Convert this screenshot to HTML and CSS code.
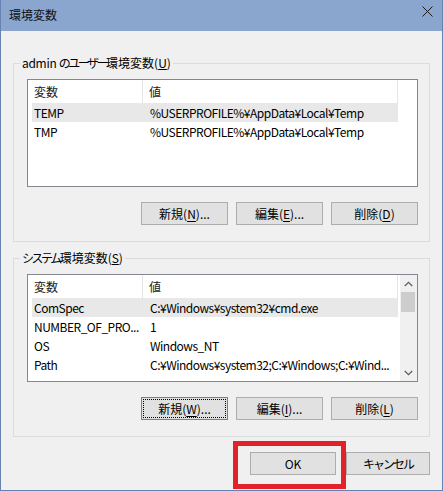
FILE: index.html
```html
<!DOCTYPE html>
<html lang="ja">
<head>
<meta charset="utf-8">
<title>環境変数</title>
<link rel="stylesheet" href="styles.css">
</head>
<body>
<div class="window">
  <div class="titlebar">
    <span class="title">環境変数</span>
    <svg class="close" width="11" height="11" viewBox="0 0 11 11"><path d="M0.5 0.5 L10.5 10.5 M10.5 0.5 L0.5 10.5" stroke="#1a1a1a" stroke-width="1" fill="none"/></svg>
  </div>
  <div class="content">
    <fieldset class="group first">
      <legend><span class="latin">admin </span><span class="kana">のユーザー</span>環境変数(<u>U</u>)</legend>
      <div class="list">
        <div class="list-main">
          <div class="header"><div class="hcell c1">変数</div><div class="hcell c2">値</div></div>
          <div class="row sel"><span class="cell c1">TEMP</span><span class="cell c2">%USERPROFILE%¥AppData¥Local¥Temp</span></div>
          <div class="row"><span class="cell c1">TMP</span><span class="cell c2">%USERPROFILE%¥AppData¥Local¥Temp</span></div>
        </div>
      </div>
      <div class="buttons">
        <button class="btn">新規(<u>N</u>)...</button>
        <button class="btn">編集(<u>E</u>)...</button>
        <button class="btn">削除(<u>D</u>)</button>
      </div>
    </fieldset>
    <fieldset class="group second">
      <legend><span class="kana">システム</span>環境変数(<u>S</u>)</legend>
      <div class="list">
        <div class="list-main">
          <div class="header"><div class="hcell c1">変数</div><div class="hcell c2">値</div></div>
          <div class="row sel"><span class="cell c1">ComSpec</span><span class="cell c2">C:¥Windows¥system32¥cmd.exe</span></div>
          <div class="row"><span class="cell c1">NUMBER_OF_PRO...</span><span class="cell c2">1</span></div>
          <div class="row"><span class="cell c1">OS</span><span class="cell c2">Windows_NT</span></div>
          <div class="row"><span class="cell c1">Path</span><span class="cell c2">C:¥Windows¥system32;C:¥Windows;C:¥Wind...</span></div>
        </div>
        <div class="scrollbar">
          <div class="arrow"><svg width="9" height="6" viewBox="0 0 9 6"><path d="M0.8 5 L4.5 1.3 L8.2 5" stroke="#606060" stroke-width="1.3" fill="none"/></svg></div>
          <div class="thumb"></div>
          <div class="track"></div>
          <div class="arrow"><svg width="9" height="6" viewBox="0 0 9 6"><path d="M0.8 1 L4.5 4.7 L8.2 1" stroke="#606060" stroke-width="1.3" fill="none"/></svg></div>
        </div>
      </div>
      <div class="buttons">
        <button class="btn focus">新規(<u>W</u>)...</button>
        <button class="btn">編集(<u>I</u>)...</button>
        <button class="btn">削除(<u>L</u>)</button>
      </div>
    </fieldset>
    <div class="dialog-buttons">
      <button class="btn ok">OK</button>
      <button class="btn cancel"><span class="kana-btn">キャンセル</span></button>
    </div>
  </div>
  <div class="annotation"></div>
</div>
</body>
</html>
```
FILE: styles.css
```css
html, body {
  margin: 0;
  padding: 0;
}
body {
  width: 443px;
  height: 491px;
  font-family: "Noto Sans CJK JP", "Noto Sans", sans-serif;
  font-size: 12px;
  color: #000;
  overflow: hidden;
}
.window {
  position: relative;
  box-sizing: border-box;
  width: 443px;
  height: 491px;
  border: 1px solid #6582b3;
  border-top: none;
  background: #f0f0f0;
  display: flex;
  flex-direction: column;
}
.titlebar {
  height: 31px;
  background: #8aa6cf;
  display: flex;
  align-items: center;
  justify-content: space-between;
  padding: 0 9px 1px 8px;
  box-sizing: border-box;
}
.title {
  font-size: 12px;
  line-height: 16px;
  color: #111;
}
.close {
  display: block;
  margin-top: -7px;
}
.content {
  padding: 0 12px;
  display: flex;
  flex-direction: column;
}
.group {
  margin: 0;
  padding: 8px 11px 16px 13px;
  border: 1px solid #dcdcdc;
  min-width: 0;
}
.group.first {
  margin-top: 24px;
}
.group.second {
  margin-top: 8px;
}
.group legend {
  padding: 0 2px;
  margin-left: -7px;
  line-height: 16px;
  font-size: 12px;
  color: #000;
}
.latin {
  letter-spacing: -0.3px;
}
.kana {
  letter-spacing: -2.5px;
}
.kana-btn {
  letter-spacing: -2px;
}
.list {
  box-sizing: border-box;
  height: 108px;
  border: 1px solid #828790;
  background: #fff;
  display: flex;
}
.list-main {
  flex: 1;
  min-width: 0;
}
.header {
  height: 23px;
  display: grid;
  grid-template-columns: 115px 255px 1fr;
  background: #fff;
  box-sizing: border-box;
}
.hcell {
  line-height: 23px;
  color: #1a1a1a;
  border-right: 1px solid #e5e5e5;
  box-sizing: border-box;
}
.hcell.c1 {
  padding-left: 6px;
}
.hcell.c2 {
  padding-left: 6px;
}
.row {
  margin-left: 4px;
  width: 366px;
  height: 19px;
  display: grid;
  grid-template-columns: 111px 1fr;
  line-height: 19px;
  white-space: nowrap;
  letter-spacing: -0.5px;
}
.row.sel {
  background: #e8e8e8;
}
.cell.c1 {
  padding-left: 2px;
}
.cell.c2 {
  padding-left: 7px;
}
.scrollbar {
  width: 17px;
  background: #f0f0f0;
  display: flex;
  flex-direction: column;
}
.arrow {
  height: 17px;
  display: flex;
  align-items: center;
  justify-content: center;
}
.arrow svg {
  display: block;
}
.thumb {
  height: 20px;
  margin: 0 2px 0 1px;
  background: #cdcdcd;
}
.track {
  flex: 1;
}
.buttons {
  display: flex;
  justify-content: flex-end;
  gap: 8px;
  margin-top: 15px;
}
.btn {
  box-sizing: border-box;
  width: 87px;
  height: 23px;
  margin: 0;
  padding: 0;
  border: 1px solid #adadad;
  background: #e1e1e1;
  font-family: "Noto Sans CJK JP", "Noto Sans", sans-serif;
  font-size: 12px;
  line-height: 20px;
  color: #000;
  text-align: center;
}
.btn u {
  text-underline-offset: 2px;
}
.btn.focus {
  border-color: #3c8de0;
  outline: 1px dotted #000;
  outline-offset: -3px;
}
.dialog-buttons {
  display: flex;
  justify-content: flex-end;
  gap: 10px;
  margin-top: 15px;
}
.btn.ok {
  width: 86px;
}
.btn.cancel {
  width: 84px;
}
.annotation {
  position: absolute;
  left: 232px;
  top: 441px;
  width: 113px;
  height: 48px;
  box-sizing: border-box;
  border: 5px solid #e3212b;
}
```
